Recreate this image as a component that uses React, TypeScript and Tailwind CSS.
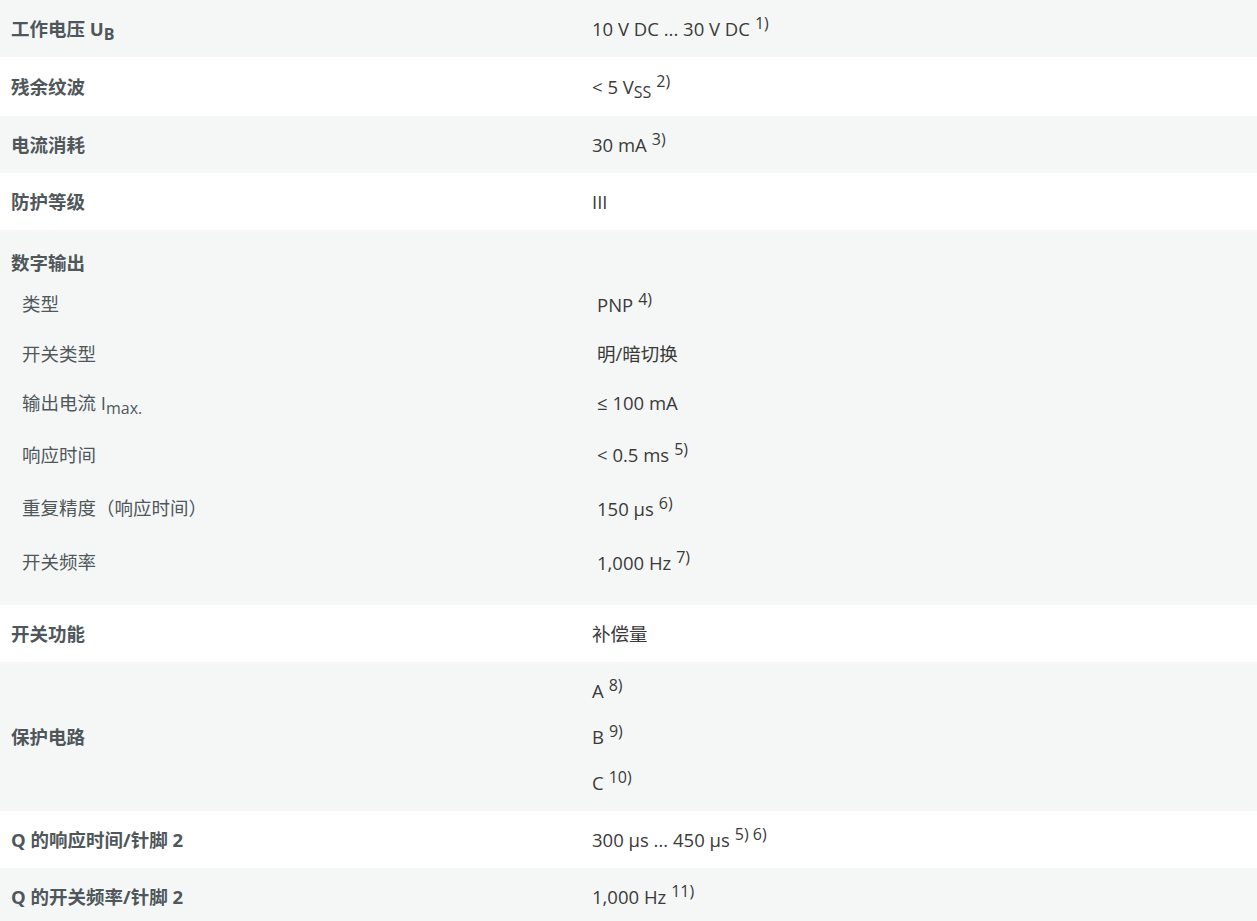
import React from 'react';

const font = { fontFamily: '"Open Sans", "Noto Sans CJK SC", sans-serif' };

function Sup({ children }: { children: React.ReactNode }) {
  return <sup className="relative top-0 ml-[5px] text-[16px] leading-none align-[7px]">{children}</sup>;
}

function Sub({ children }: { children: React.ReactNode }) {
  return <sub className="relative bottom-0 text-[16px] leading-none align-[-4px]">{children}</sub>;
}

interface Row {
  label: React.ReactNode;
  value: React.ReactNode;
  gray: boolean;
}

const simpleTop: Row[] = [
  { label: <>工作电压 U<Sub>B</Sub></>, value: <>10 V DC ... 30 V DC<Sup>1)</Sup></>, gray: true },
  { label: '残余纹波', value: <>&lt; 5 V<Sub>SS</Sub><Sup>2)</Sup></>, gray: false },
  { label: '电流消耗', value: <>30 mA<Sup>3)</Sup></>, gray: true },
  { label: '防护等级', value: 'III', gray: false },
];

const digital: { label: React.ReactNode; value: React.ReactNode; h: string }[] = [
  { label: '类型', value: <>PNP<Sup>4)</Sup></>, h: 'h-[50px]' },
  { label: '开关类型', value: '明/暗切换', h: 'h-[49px]' },
  { label: <>输出电流 I<Sub>max.</Sub></>, value: '≤ 100 mA', h: 'h-[50px]' },
  { label: '响应时间', value: <>&lt; 0.5 ms<Sup>5)</Sup></>, h: 'h-[53px]' },
  { label: '重复精度（响应时间）', value: <>150 μs<Sup>6)</Sup></>, h: 'h-[54px]' },
  { label: '开关频率', value: <>1,000 Hz<Sup>7)</Sup></>, h: 'h-[54px]' },
];

function SimpleRow({ row, h = 'h-[57px]' }: { row: Row; h?: string }) {
  return (
    <div className={`grid grid-cols-[592px_1fr] items-center ${h} ${row.gray ? 'bg-[#f5f7f7]' : 'bg-white'}`}>
      <div className="pl-[11px] font-bold text-[#4f575b]">{row.label}</div>
      <div className="text-[#3a3a3a]">{row.value}</div>
    </div>
  );
}

export default function App() {
  return (
    <div style={font} className="w-[1257px] text-[18.5px] leading-[26px] bg-white">
      {simpleTop.map((r, i) => (
        <SimpleRow key={i} row={r} h={i === 1 ? 'h-[59px]' : 'h-[57px]'} />
      ))}

      <div className="bg-[#f5f7f7] pt-[20px] pb-[16px] h-[375px]">
        <div className="pl-[11px] font-bold text-[#4f575b]">数字输出</div>
        <div className="mt-[3px]">
          {digital.map((d, i) => (
            <div key={i} className={`grid grid-cols-[597px_1fr] items-center ${d.h}`}>
              <div className="pl-[22px] text-[#4f575b]">{d.label}</div>
              <div className="text-[#3a3a3a]">{d.value}</div>
            </div>
          ))}
        </div>
      </div>

      <SimpleRow row={{ label: '开关功能', value: '补偿量', gray: false }} />

      <div className="grid grid-cols-[592px_1fr] items-center h-[149px] bg-[#f5f7f7]">
        <div className="pl-[11px] font-bold text-[#4f575b]">保护电路</div>
        <div className="flex flex-col text-[#3a3a3a]">
          <div className="h-[46px] flex items-center"><span>A<Sup>8)</Sup></span></div>
          <div className="h-[46px] flex items-center"><span>B<Sup>9)</Sup></span></div>
          <div className="h-[46px] flex items-center"><span>C<Sup>10)</Sup></span></div>
        </div>
      </div>

      <SimpleRow row={{ label: 'Q 的响应时间/针脚 2', value: <>300 μs ... 450 μs<Sup>5) 6)</Sup></>, gray: false }} />
      <SimpleRow row={{ label: 'Q 的开关频率/针脚 2', value: <>1,000 Hz<Sup>11)</Sup></>, gray: true }} />
    </div>
  );
}
